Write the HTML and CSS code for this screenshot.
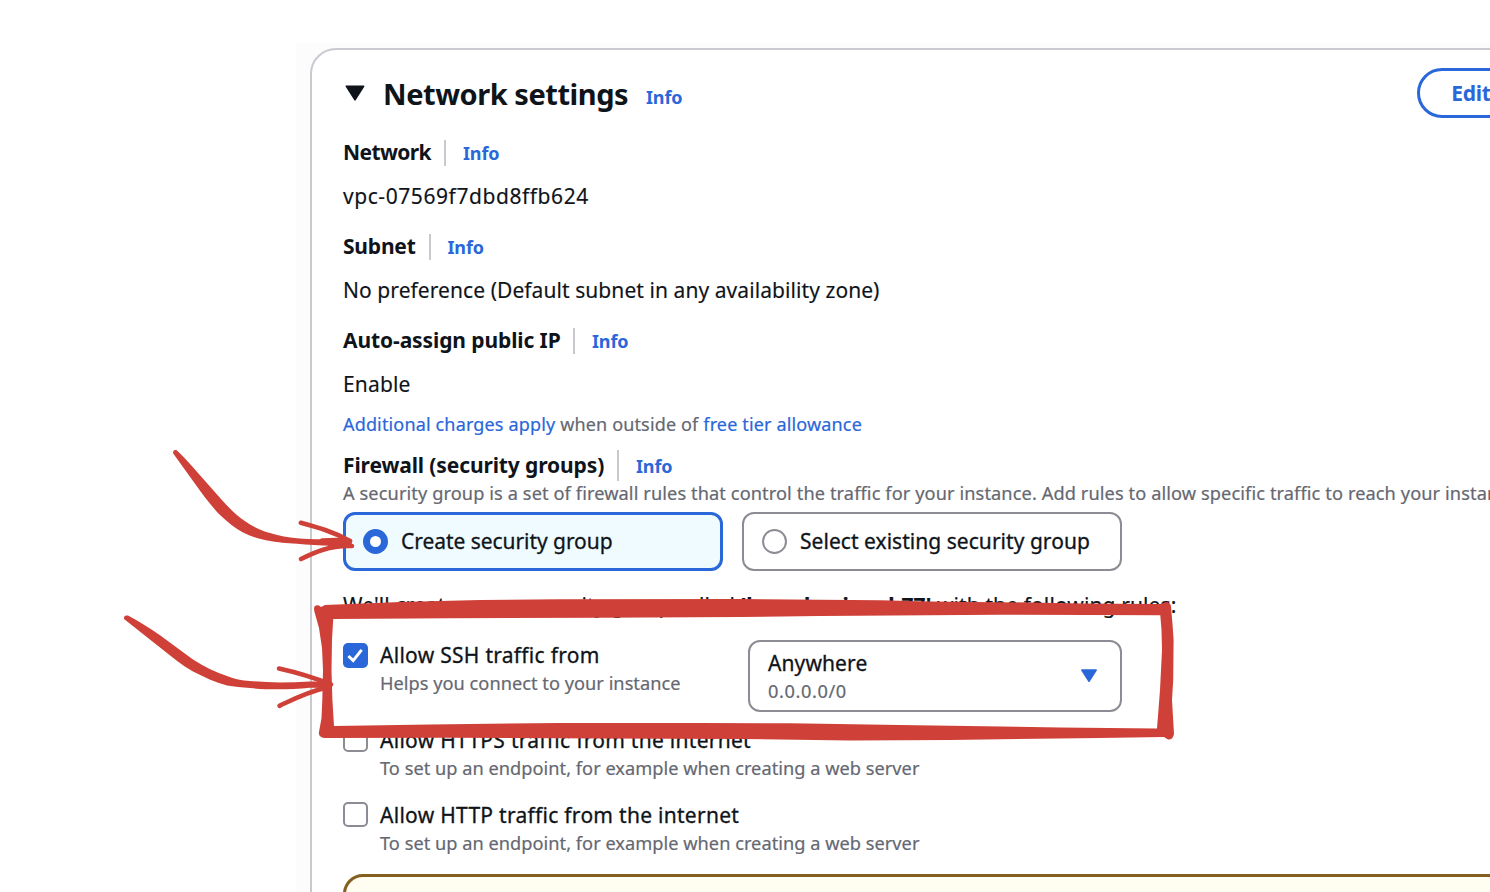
FILE: index.html
```html
<!DOCTYPE html>
<html lang="en">
<head>
<meta charset="utf-8">
<title>Network settings</title>
<link rel="stylesheet" href="styles.css">
</head>
<body>
<main class="page">
  <section class="card">
    <header class="card-header">
      <svg class="caret" width="20" height="16" viewBox="0 0 20 16"><path d="M1.4 1.2H18.6L10 14.9Z" fill="#0f141a" stroke="#0f141a" stroke-width="1.6" stroke-linejoin="round"/></svg>
      <h2 class="title">Network settings</h2>
      <a class="info info-title">Info</a>
      <button class="edit">Edit</button>
    </header>

    <div class="label-row"><span class="label l-network">Network</span><a class="info">Info</a></div>
    <div class="value v-vpc">vpc-07569f7dbd8ffb624</div>
    <div class="label-row"><span class="label l-subnet">Subnet</span><a class="info">Info</a></div>
    <div class="value v-pref">No preference (Default subnet in any availability zone)</div>
    <div class="label-row"><span class="label l-ip">Auto-assign public IP</span><a class="info">Info</a></div>
    <div class="value v-enable">Enable</div>
    <div class="charges"><a>Additional charges apply</a> when outside of <a>free tier allowance</a></div>

    <div class="label-row firewall"><span class="label l-fw">Firewall (security groups)</span><a class="info">Info</a></div>
    <p class="hint fw-hint">A security group is a set of firewall rules that control the traffic for your instance. Add rules to allow specific traffic to reach your instance.</p>
    <div class="tiles">
      <label class="tile selected"><span class="radio on"></span><span class="tile-text">Create security group</span></label>
      <label class="tile"><span class="radio"></span><span class="tile-text t-select">Select existing security group</span></label>
    </div>
    <p class="summary">We'll create a new security group called <b>'launch-wizard-77'</b> with the following rules:</p>

    <div class="rule ssh">
      <svg class="check" width="25" height="25" viewBox="0 0 25 25"><rect width="25" height="25" rx="5" fill="#2a67d9"/><path d="M5.4 13L10.2 17.6L18.6 6.8" fill="none" stroke="#fff" stroke-width="3"/></svg>
      <div class="rule-text"><div class="rule-name">Allow SSH traffic from</div><div class="hint">Helps you connect to your instance</div></div>
      <div class="select">
        <div class="option"><div class="rule-name anywhere">Anywhere</div><div class="hint cidr">0.0.0.0/0</div></div>
        <svg width="18" height="14" viewBox="0 0 18 14"><path d="M1.8 1.1H16.2L9 12.3Z" fill="#2a67d9" stroke="#2a67d9" stroke-width="1.5" stroke-linejoin="round"/></svg>
      </div>
    </div>
    <div class="rule https">
      <span class="check box"></span>
      <div class="rule-text"><div class="rule-name">Allow HTTPS traffic from the internet</div><div class="hint">To set up an endpoint, for example when creating a web server</div></div>
    </div>
    <div class="rule http">
      <span class="check box"></span>
      <div class="rule-text"><div class="rule-name">Allow HTTP traffic from the internet</div><div class="hint">To set up an endpoint, for example when creating a web server</div></div>
    </div>
    <div class="alert"></div>
  </section>
</main>

<svg class="marks" width="1490" height="892" viewBox="0 0 1490 892">
  <g fill="#cf4138">
    <path d="M173.2 453.4Q172.4 449.3 176.4 450C184 457 190 464 198 473L221 499C229 508 236 515 244 520.5C253 527 262 531 270 533C280 536 288 537.3 297 538.3C315 540 335 539.5 349 538L353 546L340 545.5C325 546 310 545 297 543.8C286 543 278 542.5 270 541C260 539.5 250 536 243 532.5C235 528.5 228 522 220 515C212 507 204 496 197 486.5Z"/>
    <path d="M124 619Q123.6 614.6 128 615.6C139 621.5 149 628 160 635.3L193 659.5C204 666.5 215 672 227 676C234 679 242 680.5 250 681C270 683 290 682.5 310 681.5L329 681.5L332 688L310 687.8C290 689.7 268 690 250 688C242 687.5 234 686.5 227 685.5C215 682.5 204 677 193 671.5C182 665.5 171 656 160 647.5Z"/>
    <path fill-rule="evenodd" d="M314 609Q314 604.5 319 605.5L321 607L325 605L400 602L480 600L560 599.3L740 599L880 600.3L930 601.5L1030 602.5L1080 603.5L1160 604L1167 602Q1171 603 1171 607L1172.5 624L1173.6 640L1173.2 680L1172 700L1174 734Q1173 740 1168 739.6L1164 737L1100 738L950 740L850 740.4L740 739L600 738.5L450 737.8L324 738Q318 737 319 732L321.5 718L322.3 700L323 670L322 648L319 628L314.5 612ZM333.2 619L450 618.3L600 617.8L740 617L820 616L1000 614.7L1160.3 615.2L1161.5 630L1162 650L1160 690L1157 728.5L1060 727.5L900 725L790 723.3L700 723L560 723L430 724.5L334 726L332.4 700L331.5 670L332 640Z"/>
  </g>
  <g fill="none" stroke="#cf4138" stroke-width="4.6" stroke-linecap="round" stroke-linejoin="round">
    <path d="M300.8 522.8C318 527.5 334 532 350 541"/>
    <path d="M301 559C314 552.5 330 545 352 546"/>
    <path d="M322 540.5L336 540L350 541L330 546"/>
    <path d="M279 668.5C295 672 310 676 331 684.5"/>
    <path d="M279.5 705.8C294 699 307 692 327 687.5"/>
  </g>
</svg>
</body>
</html>
```
FILE: styles.css
```css
* { box-sizing: border-box; }
body {
  margin: 0;
  width: 1490px;
  height: 892px;
  overflow: hidden;
  position: relative;
  background: #fff;
  color: #0f141a;
  font-family: "Noto Sans", "Open Sans", sans-serif;
  font-size: 21px;
  line-height: 26px;
  white-space: nowrap;
}
p, h2 { margin: 0; }
.page {
  margin: 43px 0 0 296px;
  padding: 5px 0 0 14px;
  height: 849px;
  overflow: hidden;
  background: #fcfcfc;
}
.card {
  width: 1300px;
  height: 1000px;
  padding: 18px 31px 0;
  background: #fff;
  border: 2px solid #c9c9d0;
  border-radius: 26px;
}
.card-header { display: flex; align-items: center; height: 50px; }
.caret { margin: 0 0 0 2px; }
.title {
  width: 245px;
  margin-left: 18px;
  padding-top: 1px;
  font-size: 29px;
  line-height: 50px;
  font-weight: 700;
  letter-spacing: -0.45px;
}
.info {
  color: #2a67d9;
  font-size: 18px;
  font-weight: 700;
  letter-spacing: -0.15px;
}
.info-title { margin: 8px 0 0 18px; }
.edit {
  width: 120px;
  height: 50px;
  margin-left: 735px;
  padding: 0 0 0 31px;
  text-align: left;
  border: 3px solid #2a67d9;
  border-radius: 25px;
  background: #fff;
  color: #2a67d9;
  font: 700 21px "Noto Sans", "Open Sans", sans-serif;
  letter-spacing: -0.3px;
}
.label-row { display: flex; height: 26px; margin-top: 24px; line-height: 24px; }
.card-header + .label-row { margin-top: 22px; }
.label-row .info { padding-top: 1px; }
.label {
  margin-right: 17px;
  border-right: 2px solid #c9c9d0;
  font-weight: 700;
}
.l-network { width: 103px; letter-spacing: -0.6px; }
.l-subnet { width: 87.5px; letter-spacing: -0.2px; }
.l-ip { width: 232px; letter-spacing: -0.1px; }
.l-fw { width: 276px; letter-spacing: -0.12px; }
.value { height: 26px; margin-top: 18px; line-height: 24px; -webkit-text-stroke: 0.15px; }
.v-vpc { letter-spacing: 0.57px; }
.v-pref { letter-spacing: 0.07px; }
.v-enable { letter-spacing: 0.15px; }
.charges {
  height: 26px;
  margin-top: 15px;
  font-size: 18px;
  line-height: 23px;
  letter-spacing: 0.155px;
  color: #656871;
  -webkit-text-stroke: 0.2px;
}
.charges a { color: #2a67d9; }
.label-row.firewall { height: 31px; margin-top: 11px; line-height: 30px; }
.hint {
  font-size: 18.2px;
  line-height: 26px;
  letter-spacing: 0.03px;
  color: #656871;
  -webkit-text-stroke: 0.2px;
}
.fw-hint { height: 26px; line-height: 24px; letter-spacing: 0.1px; }
.tiles { display: flex; gap: 19px; margin-top: 5px; }
.tile {
  display: flex;
  align-items: center;
  gap: 13px;
  width: 380px;
  height: 59px;
  padding-left: 18px;
  border: 2px solid #8c8c94;
  border-radius: 12px;
}
.tile.selected { padding-left: 17px; border: 3px solid #2a67d9; background: #f0fbff; }
.radio {
  width: 25px;
  height: 25px;
  border: 2px solid #8c8c94;
  border-radius: 50%;
  background: #fff;
}
.radio.on { border: 7.5px solid #2a67d9; }
.tile-text { padding-bottom: 2px; letter-spacing: -0.05px; -webkit-text-stroke: 0.3px; }
.t-select { letter-spacing: 0.04px; }
.summary { margin-top: 21px; height: 27px; letter-spacing: 0.11px; -webkit-text-stroke: 0.2px; }
.rule { display: flex; }
.check { flex: none; width: 25px; height: 25px; margin-right: 12px; }
.box { border: 2px solid #8c8c94; border-radius: 5px; }
.rule-name { line-height: 26px; letter-spacing: 0.28px; -webkit-text-stroke: 0.3px; }
.rule-name + .hint { margin-top: 2px; }
.ssh { height: 72px; margin-top: 21px; }
.ssh > .check { margin-top: 3px; }
.ssh .rule-text { width: 368px; margin-top: 2px; }
.rule-name.anywhere { letter-spacing: 0.1px; }
.option { padding-top: 2px; }
.select {
  display: flex;
  align-items: center;
  justify-content: space-between;
  width: 374px;
  height: 72px;
  padding: 0 22px 0 18px;
  border: 2px solid #8c8c94;
  border-radius: 12px;
}
.hint.cidr { letter-spacing: 0.6px; }
.https { margin-top: 15px; }
.http { margin-top: 21px; }
.alert {
  height: 100px;
  margin-top: 18px;
  border: 3px solid #855f1f;
  border-radius: 20px;
  background: #fffef0;
}
.marks { position: absolute; left: 0; top: 0; pointer-events: none; }
```
